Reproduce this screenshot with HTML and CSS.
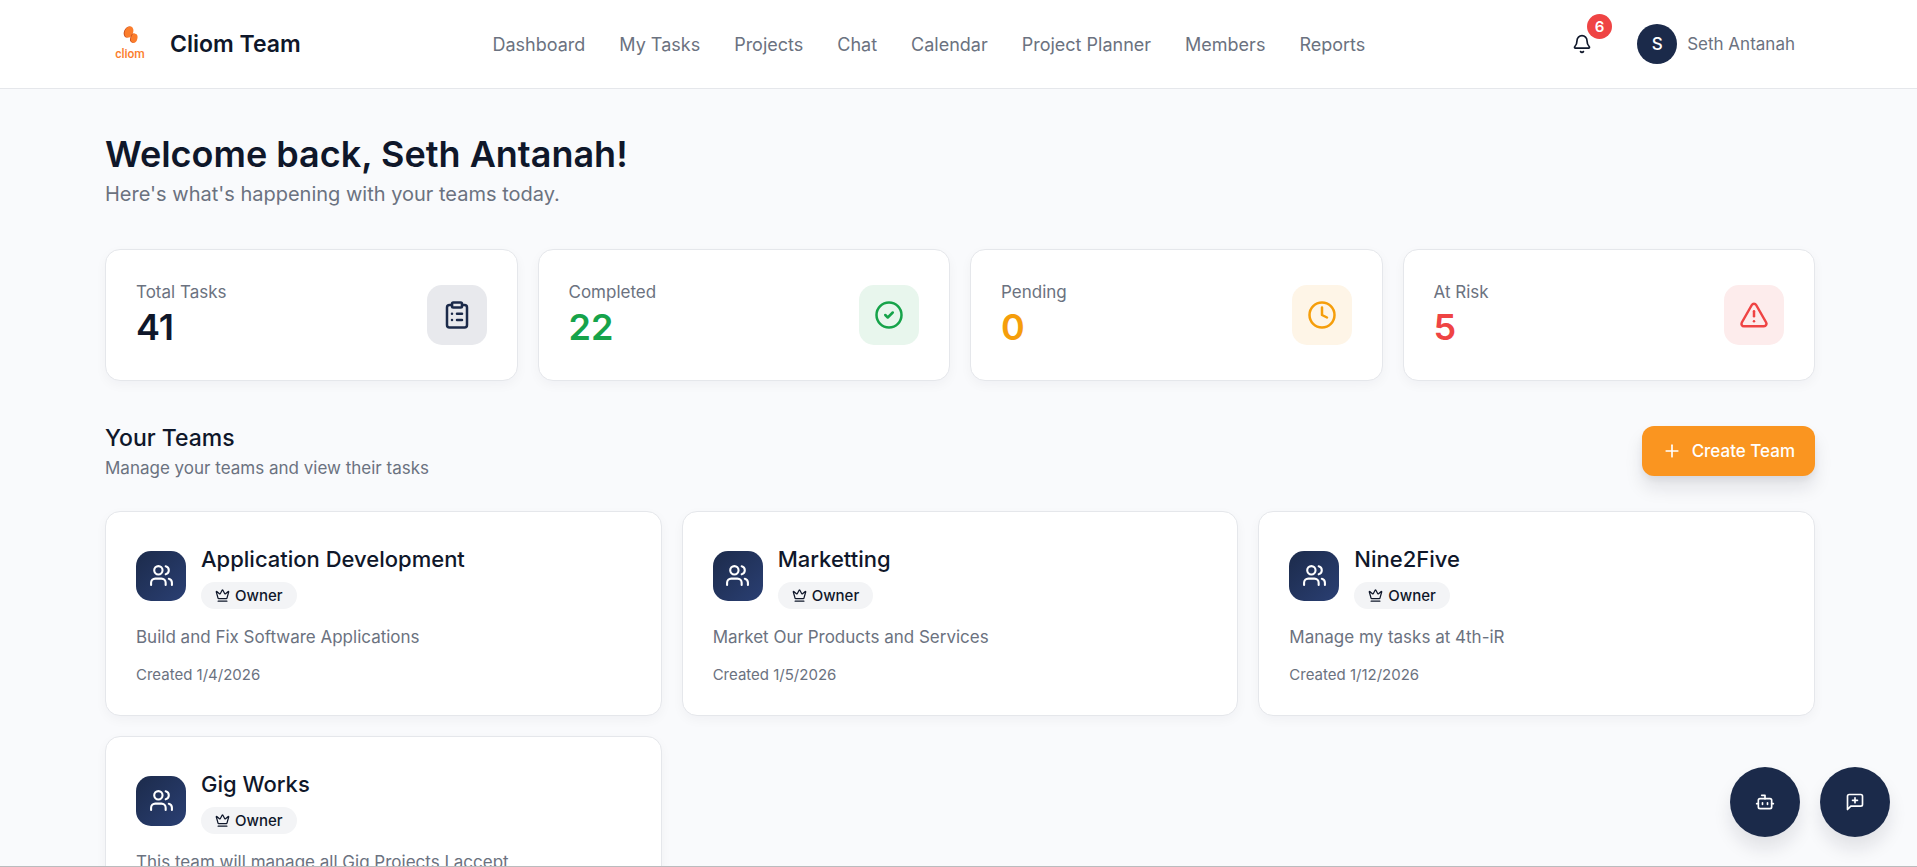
FILE: index.html
```html
<!DOCTYPE html>
<html lang="en">
<head>
<meta charset="utf-8">
<meta name="viewport" content="width=device-width, initial-scale=1">
<title>Cliom Team</title>
<link rel="stylesheet" href="styles.css">
</head>
<body>
<svg class="sprite" aria-hidden="true">
  <symbol id="users" viewBox="0 0 24 24"><path d="M16 21v-2a4 4 0 0 0-4-4H6a4 4 0 0 0-4 4v2"/><circle cx="9" cy="7" r="4"/><path d="M22 21v-2a4 4 0 0 0-3-3.87"/><path d="M16 3.13a4 4 0 0 1 0 7.75"/></symbol>
  <symbol id="crown" viewBox="0 0 24 24"><path d="M11.562 3.266a.5.5 0 0 1 .876 0L15.39 8.87a1 1 0 0 0 1.516.294L21.183 5.5a.5.5 0 0 1 .798.519l-2.834 10.246a1 1 0 0 1-.956.734H5.81a1 1 0 0 1-.957-.734L2.02 6.02a.5.5 0 0 1 .798-.519l4.276 3.664a1 1 0 0 0 1.516-.294z"/><path d="M5 21h14"/></symbol>
</svg>

<header class="topbar">
  <div class="container topbar-row">
    <a class="brand" href="#">
      <svg class="logo" viewBox="0 0 50 50" aria-hidden="true">
        <ellipse cx="23" cy="13" rx="4" ry="5.8" transform="rotate(22 23 13)" fill="#c4481a"/>
        <ellipse cx="24" cy="13" rx="4.2" ry="5.8" transform="rotate(22 24 13)" fill="#fb7d2c"/>
        <ellipse cx="28.4" cy="19.2" rx="3.2" ry="4.6" transform="rotate(14 28.4 19.2)" fill="#c4481a"/>
        <ellipse cx="29.2" cy="19.2" rx="3.2" ry="4.6" transform="rotate(14 29.2 19.2)" fill="#fb7d2c"/>
        <text class="logo-text" x="25" y="39">cliom</text>
      </svg>
      <span class="brand-name">Cliom Team</span>
    </a>
    <nav class="nav">
      <a href="#">Dashboard</a>
      <a href="#">My Tasks</a>
      <a href="#">Projects</a>
      <a href="#">Chat</a>
      <a href="#">Calendar</a>
      <a href="#">Project Planner</a>
      <a href="#">Members</a>
      <a href="#">Reports</a>
    </nav>
    <div class="actions">
      <button class="bell" type="button" aria-label="Notifications">
        <svg class="icon icon-20" viewBox="0 0 24 24"><path d="M10.268 21a2 2 0 0 0 3.464 0"/><path d="M3.262 15.326A1 1 0 0 0 4 17h16a1 1 0 0 0 .74-1.673C19.41 13.956 18 12.499 18 8A6 6 0 0 0 6 8c0 4.499-1.411 5.956-2.738 7.326"/></svg>
        <span class="count">6</span>
      </button>
      <button class="user" type="button">
        <span class="avatar">S</span>
        <span>Seth Antanah</span>
      </button>
    </div>
  </div>
</header>

<main class="container main">
  <h1 class="welcome">Welcome back, Seth Antanah!</h1>
  <p class="lead">Here's what's happening with your teams today.</p>

  <section class="stats" aria-label="Task summary">
    <article class="card stat">
      <div><p class="stat-label">Total Tasks</p><p class="stat-value">41</p></div>
      <span class="stat-icon navy"><svg class="icon icon-30" viewBox="0 0 24 24"><rect width="8" height="4" x="8" y="2" rx="1"/><path d="M16 4h2a2 2 0 0 1 2 2v14a2 2 0 0 1-2 2H6a2 2 0 0 1-2-2V6a2 2 0 0 1 2-2h2"/><path d="M12 11h4"/><path d="M12 16h4"/><path d="M8 11h.01"/><path d="M8 16h.01"/></svg></span>
    </article>
    <article class="card stat">
      <div><p class="stat-label">Completed</p><p class="stat-value green-text">22</p></div>
      <span class="stat-icon green"><svg class="icon icon-30" viewBox="0 0 24 24"><circle cx="12" cy="12" r="10"/><path d="m9 12 2 2 4-4"/></svg></span>
    </article>
    <article class="card stat">
      <div><p class="stat-label">Pending</p><p class="stat-value amber-text">0</p></div>
      <span class="stat-icon amber"><svg class="icon icon-30" viewBox="0 0 24 24"><circle cx="12" cy="12" r="10"/><path d="M12 6v6l4 2"/></svg></span>
    </article>
    <article class="card stat">
      <div><p class="stat-label">At Risk</p><p class="stat-value red-text">5</p></div>
      <span class="stat-icon red"><svg class="icon icon-30" viewBox="0 0 24 24"><path d="m21.73 18-8-14a2 2 0 0 0-3.48 0l-8 14A2 2 0 0 0 4 21h16a2 2 0 0 0 1.73-3"/><path d="M12 9v4"/><path d="M12 17h.01"/></svg></span>
    </article>
  </section>

  <section>
    <div class="section-head">
      <div>
        <h2 class="section-title">Your Teams</h2>
        <p class="section-sub">Manage your teams and view their tasks</p>
      </div>
      <button class="create" type="button">
        <svg class="icon icon-20" viewBox="0 0 24 24"><path d="M5 12h14"/><path d="M12 5v14"/></svg>
        Create Team
      </button>
    </div>

    <div class="teams">
      <article class="card team">
        <div class="team-head">
          <span class="team-icon"><svg class="icon icon-25"><use href="#users"/></svg></span>
          <div><h3 class="team-name">Application Development</h3><span class="role"><svg class="icon icon-15"><use href="#crown"/></svg>Owner</span></div>
        </div>
        <p class="team-desc">Build and Fix Software Applications</p>
        <p class="team-date">Created 1/4/2026</p>
      </article>
      <article class="card team">
        <div class="team-head">
          <span class="team-icon"><svg class="icon icon-25"><use href="#users"/></svg></span>
          <div><h3 class="team-name">Marketting</h3><span class="role"><svg class="icon icon-15"><use href="#crown"/></svg>Owner</span></div>
        </div>
        <p class="team-desc">Market Our Products and Services</p>
        <p class="team-date">Created 1/5/2026</p>
      </article>
      <article class="card team">
        <div class="team-head">
          <span class="team-icon"><svg class="icon icon-25"><use href="#users"/></svg></span>
          <div><h3 class="team-name">Nine2Five</h3><span class="role"><svg class="icon icon-15"><use href="#crown"/></svg>Owner</span></div>
        </div>
        <p class="team-desc">Manage my tasks at 4th-iR</p>
        <p class="team-date">Created 1/12/2026</p>
      </article>
      <article class="card team">
        <div class="team-head">
          <span class="team-icon"><svg class="icon icon-25"><use href="#users"/></svg></span>
          <div><h3 class="team-name">Gig Works</h3><span class="role"><svg class="icon icon-15"><use href="#crown"/></svg>Owner</span></div>
        </div>
        <p class="team-desc">This team will manage all Gig Projects I accept</p>
      </article>
    </div>
  </section>
</main>

<div class="floating">
  <button class="fab" type="button" aria-label="Assistant"><svg class="icon icon-20" viewBox="0 0 24 24"><path d="M12 8V4H8"/><rect width="16" height="12" x="4" y="8" rx="2"/><path d="M2 14h2"/><path d="M20 14h2"/><path d="M15 13v2"/><path d="M9 13v2"/></svg></button>
  <button class="fab" type="button" aria-label="New message"><svg class="icon icon-20" viewBox="0 0 24 24"><path d="M21 15a2 2 0 0 1-2 2H7l-4 4V5a2 2 0 0 1 2-2h14a2 2 0 0 1 2 2z"/><path d="M12 7v6"/><path d="M9 10h6"/></svg></button>
</div>
<div class="window-edge"></div>
</body>
</html>
```
FILE: styles.css
```css
:root {
  --navy: #1b2a4a;
  --ink: #0f172a;
  --muted: #6b7280;
  --line: #e5e7eb;
}

* { box-sizing: border-box; }

body {
  margin: 0;
  background: #f9fafc;
  color: var(--ink);
  font-family: Inter, "Liberation Sans", sans-serif;
  font-size: 17px;
  line-height: 25px;
}

h1, h2, h3, p { margin: 0; }
a { color: inherit; text-decoration: none; }
button { border: 0; padding: 0; background: none; color: inherit; font: inherit; cursor: pointer; }

.sprite { position: absolute; width: 0; height: 0; }
.container { padding: 0 102px 0 105px; }

.icon {
  flex: none;
  fill: none;
  stroke: currentColor;
  stroke-width: 2;
  stroke-linecap: round;
  stroke-linejoin: round;
}
.icon-15 { width: 15px; height: 15px; }
.icon-20 { width: 20px; height: 20px; }
.icon-25 { width: 25px; height: 25px; }
.icon-30 { width: 30px; height: 30px; }

/* Top bar */
.topbar { background: #fff; border-bottom: 1px solid var(--line); }
.topbar-row { display: flex; align-items: center; justify-content: space-between; min-height: 88px; }
.brand { display: flex; align-items: center; gap: 15px; }
.logo { width: 50px; height: 50px; }
.logo-text { fill: #fb7d2c; font: 500 12px Roboto, sans-serif; text-anchor: middle; }
.brand-name { font-size: 23px; font-weight: 600; }
.nav { display: flex; gap: 34px; color: var(--muted); font-size: 18px; }
.actions { display: flex; align-items: center; gap: 10px; }
.bell { position: relative; display: grid; place-items: center; width: 50px; height: 50px; }
.count {
  position: absolute;
  top: -5px;
  right: -5px;
  width: 25px;
  height: 25px;
  border-radius: 50%;
  background: #ef4444;
  color: #fff;
  font-size: 15px;
  font-weight: 600;
}
.user { display: flex; align-items: center; gap: 10px; padding: 5px 20px; color: var(--muted); }
.avatar {
  display: grid;
  place-items: center;
  width: 40px;
  height: 40px;
  border-radius: 50%;
  background: var(--navy);
  color: #fff;
  font-weight: 500;
}

/* Page */
.main { padding-top: 40px; padding-bottom: 40px; }
.welcome { font-size: 36px; line-height: 50px; font-weight: 600; }
.lead { color: var(--muted); font-size: 20px; line-height: 30px; }

.card {
  border: 1px solid var(--line);
  border-radius: 15px;
  background: #fff;
  box-shadow: 0 4px 12px rgba(15, 23, 42, 0.04);
}

.stats { display: grid; grid-template-columns: repeat(4, 1fr); gap: 20px; margin: 40px 0; }
.stat { display: flex; align-items: center; justify-content: space-between; padding: 30px; }
.stat-label { color: var(--muted); }
.stat-value { font-size: 36px; line-height: 45px; font-weight: 600; }
.stat-icon { display: grid; place-items: center; width: 60px; height: 60px; border-radius: 15px; }
.navy { background: #e8e9ed; color: var(--navy); }
.green { background: #e8f6ed; color: #16a34a; }
.amber { background: #fef5e7; color: #f59e0b; }
.red { background: #fdecec; color: #ef4444; }
.green-text { color: #16a34a; }
.amber-text { color: #f59e0b; }
.red-text { color: #ef4444; }

.section-head { display: flex; align-items: center; justify-content: space-between; margin-bottom: 30px; }
.section-title { font-size: 23px; line-height: 35px; font-weight: 500; }
.section-sub { color: var(--muted); }
.create {
  display: flex;
  align-items: center;
  gap: 10px;
  height: 50px;
  padding: 0 20px;
  border-radius: 12px;
  background: #fa9520;
  color: #fff;
  font-weight: 500;
  box-shadow: 0 12px 18px rgba(15, 23, 42, 0.1), 0 4px 6px rgba(15, 23, 42, 0.05);
}

.teams { display: grid; grid-template-columns: repeat(3, 1fr); gap: 20px; }
.team { display: flex; flex-direction: column; padding: 30px; }
.team-head { display: flex; align-items: center; gap: 15px; }
.team-icon {
  display: grid;
  place-items: center;
  width: 50px;
  height: 50px;
  border-radius: 15px;
  background: linear-gradient(135deg, #1c2b4b, #2a3f73);
  color: #fff;
}
.team-name { margin-bottom: 5px; font-size: 22px; line-height: 35px; font-weight: 500; }
.role {
  display: flex;
  align-items: center;
  gap: 5px;
  width: max-content;
  height: 27px;
  padding: 0 14px;
  border-radius: 14px;
  background: #f3f4f6;
  font-size: 15px;
  font-weight: 500;
}
.team-desc { margin-top: 16px; color: var(--muted); }
.team-date { margin-top: 15px; color: var(--muted); font-size: 15px; line-height: 20px; }

/* Floating buttons */
.floating { position: fixed; right: 27px; bottom: 30px; display: flex; gap: 20px; }
.fab {
  display: grid;
  place-items: center;
  width: 70px;
  height: 70px;
  border-radius: 50%;
  background: var(--navy);
  color: #fff;
  box-shadow: 0 12px 18px rgba(15, 23, 42, 0.1);
}
.window-edge { position: fixed; right: 0; bottom: 0; left: 0; height: 1px; background: #babcbe; }
```
